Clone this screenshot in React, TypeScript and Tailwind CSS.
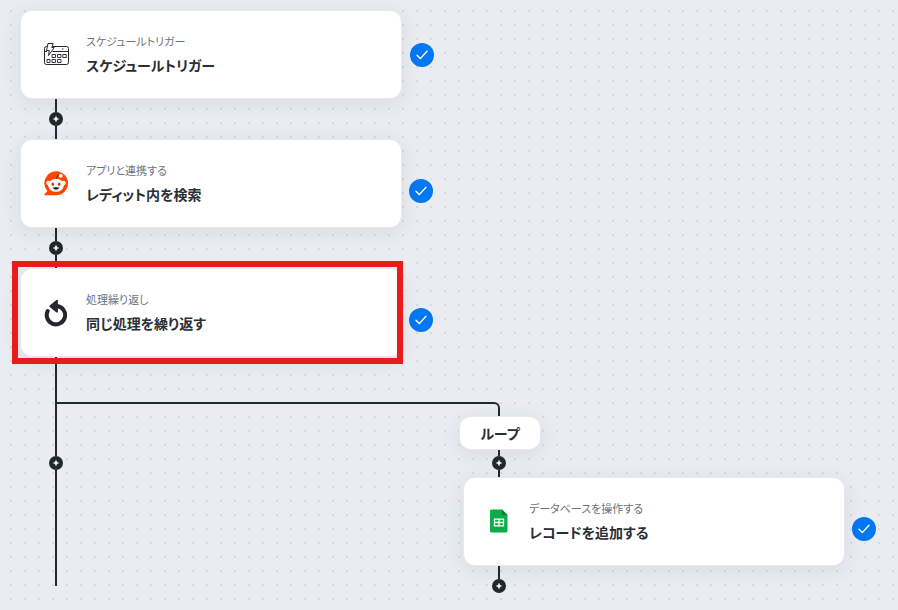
import type { ReactNode } from "react";

function CalendarIcon() {
  return (
    <svg width="26" height="25" viewBox="0 0 26 25" fill="none" stroke="#23272e" aria-hidden="true">
      <path d="M9.500 4.500h14a2 2 0 0 1 2 2v14a2 2 0 0 1-2 2h-20a2 2 0 0 1-2-2v-14a2 2 0 0 1 2-2h1M9.500 9.500h16M1.500 9.500h2.500" />
      <path d="M5 1.500h5.200L8.800 5.500h2.400L5.500 13.500l.8-5H3.500z" strokeLinejoin="round" fill="#fff" />
      <path d="M9 12.500h3.500v3H9zM14.500 12.500H18v3h-3.500zM19.800 12.500h3.500v3h-3.500zM4 17.500h3v3H4zM9 17.500h3.500v3H9zM14.500 17.500H18v3h-3.500z" strokeWidth=".9" />
      <path d="M19 7h1.400" strokeWidth="1.200" />
    </svg>
  );
}

function RedditIcon() {
  return (
    <svg width="26" height="27" viewBox="0 0 26 27" aria-hidden="true">
      <path d="M13 1.300a12 12 0 1 1 0 24H2.200c-.9 0-1.200-.8-.6-1.400l2.800-2.700A12 12 0 0 1 13 1.300z" fill="#ff4500" />
      <path d="M13.200 9c.2-2.400 1.300-3.700 3.600-4" fill="none" stroke="#4a2a1c" strokeWidth="1" />
      <circle cx="17.800" cy="5.700" r="2" fill="#f4f7f8" />
      <circle cx="5.500" cy="13" r="2.300" fill="#f4f7f8" />
      <circle cx="20.500" cy="13" r="2.300" fill="#f4f7f8" />
      <ellipse cx="13" cy="15.300" rx="7.800" ry="6.500" fill="#f6f9fa" />
      <ellipse cx="9.800" cy="14.200" rx="1.300" ry="1.600" fill="#d8350f" />
      <ellipse cx="16.200" cy="14.200" rx="1.300" ry="1.600" fill="#d8350f" />
      <path d="M9.800 17.600q3.200-.5 6.400 0c-.6 2.800-5.800 2.800-6.400 0z" fill="#16242b" />
    </svg>
  );
}

function LoopIcon() {
  return (
    <svg width="24" height="28" viewBox="0 0 24 28" aria-hidden="true">
      <path d="M3.700 12A9.200 9.200 0 1 0 13 7" fill="none" stroke="#23272e" strokeWidth="4" strokeLinecap="round" />
      <path d="M13 1.700v11L6.300 7.300z" fill="#23272e" stroke="#23272e" strokeWidth="1.800" strokeLinejoin="round" />
    </svg>
  );
}

function SheetIcon() {
  return (
    <svg width="18" height="25" viewBox="0 0 18 25" aria-hidden="true">
      <path d="M1.500.5H12L17.500 6v16a1.500 1.500 0 0 1-1.500 1.500H1.500A1.500 1.500 0 0 1 0 22V2A1.500 1.500 0 0 1 1.500.5z" fill="#0cac4b" />
      <path d="M12 .5 17.500 6H12z" fill="#078535" />
      <path d="M4.500 10.200h9v6.600h-9zM9 10v7M4.500 13.500h9" fill="none" stroke="#fff" strokeWidth="1.300" />
    </svg>
  );
}

function DoneBadge({ className }: { className: string }) {
  return (
    <span role="img" aria-label="完了" className={`flex size-6 shrink-0 items-center justify-center rounded-full bg-[#0477f2] ${className}`}>
      <svg width="12" height="10" viewBox="0 0 12 10" fill="none" stroke="#fff" strokeWidth="1.400" strokeLinecap="round" strokeLinejoin="round">
        <path d="M1 5.200 4.300 8.600 11 1.200" />
      </svg>
    </span>
  );
}

type StepProps = {
  icon: ReactNode;
  label: string;
  title: string;
  trigger?: boolean;
  selected?: boolean;
};

function Step({ icon, label, title, trigger, selected }: StepProps) {
  return (
    <div className="flex items-center gap-[7px]">
      <div className="relative flex h-[89px] w-[382px] items-center gap-[15px] rounded-xl border border-[#e6e9ed] bg-white px-5 shadow-[0_4px_20px_rgba(35,45,60,0.09)]">
        <div className="flex w-[30px] shrink-0 justify-center">{icon}</div>
        <div className="pb-1">
          <p className="text-[11px] leading-5 text-[#69727d]">{label}</p>
          <h2 className="mt-1 text-[14px] leading-5 font-bold text-[#2a2e35]">{title}</h2>
        </div>
        {selected && <div className="absolute -inset-y-2 -right-0.5 -left-[9px] border-6 border-[#e91c1c]" />}
      </div>
      <DoneBadge className={trigger ? "ml-px" : "mt-3.5"} />
    </div>
  );
}

function AddButton() {
  return (
    <button type="button" aria-label="追加" className="flex size-3.5 shrink-0 items-center justify-center rounded-full bg-[#23272e]">
      <svg width="6" height="6" viewBox="0 0 6 6" stroke="#fff" strokeWidth="1.600">
        <path d="M3 .5v5M.5 3h5" />
      </svg>
    </button>
  );
}

function Connector({ before, after }: { before: string; after?: string }) {
  return (
    <div className="ml-[29px] flex w-3.5 flex-col items-center">
      <div className={`w-0.5 bg-[#23272e] ${before}`} />
      <AddButton />
      {after && <div className={`w-0.5 bg-[#23272e] ${after}`} />}
    </div>
  );
}

export default function App() {
  return (
    <main
      lang="ja"
      className="min-h-screen overflow-auto bg-[#e9edf2] bg-[radial-gradient(circle_at_11px_11px,#d5dae0_1px,transparent_1px)] bg-[size:14px_14px] pt-2.5 pl-5 font-['Noto_Sans_CJK_JP',sans-serif] [font-feature-settings:'palt']"
    >
      <Step icon={<CalendarIcon />} label="スケジュールトリガー" title="スケジュールトリガー" trigger />
      <Connector before="h-[13px]" after="h-[13px]" />
      <Step icon={<RedditIcon />} label="アプリと連携する" title="レディット内を検索" />
      <Connector before="h-[13px]" after="h-[13px]" />
      <Step icon={<LoopIcon />} label="処理繰り返し" title="同じ処理を繰り返す" selected />

      <div className="flex items-start">
        <Connector before="h-[99px]" after="h-[116px]" />
        <div className="mt-[45px] -ml-1.5">
          <div className="h-3.5 w-[443px] rounded-tr-md border-t-2 border-r-2 border-[#23272e]" />
          <div className="ml-[406px]">
            <div className="-ml-1 flex h-[34px] w-[82px] items-center justify-center rounded-xl border border-[#e6e9ed] bg-white text-[14px] font-bold text-[#2a2e35] shadow-[0_4px_20px_rgba(35,45,60,0.09)]">
              ループ
            </div>
            <Connector before="h-1.5" after="h-[7px]" />
            <Step icon={<SheetIcon />} label="データベースを操作する" title="レコードを追加する" />
            <Connector before="h-[13px]" />
          </div>
        </div>
      </div>
    </main>
  );
}
